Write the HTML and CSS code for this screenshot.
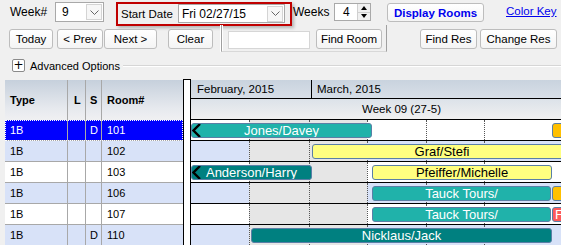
FILE: index.html
```html
<!DOCTYPE html>
<html>
<head>
<meta charset="utf-8">
<link rel="stylesheet" href="styles.css">
</head>
<body>
<div class="app">
  <div class="row1">
    <span class="lbl lbl-week">Week#</span>
    <div class="combo combo-week">
      <span class="val">9</span>
      <span class="dd"><svg width="9" height="5" viewBox="0 0 9 5"><polyline points="0.5,0.5 4.5,4.5 8.5,0.5" fill="none" stroke="#666" stroke-width="1"/></svg></span>
    </div>
    <div class="startbox">
      <span class="lbl lbl-start">Start Date</span>
      <div class="combo combo-date">
        <span class="val">Fri 02/27/15</span>
        <span class="dd"><svg width="9" height="5" viewBox="0 0 9 5"><polyline points="0.5,0.5 4.5,4.5 8.5,0.5" fill="none" stroke="#666" stroke-width="1"/></svg></span>
      </div>
    </div>
    <span class="lbl lbl-weeks">Weeks</span>
    <div class="spin">
      <span class="val">4</span>
      <div class="spin-btns"><span class="sb"><i class="up"></i></span><span class="sb"><i class="down"></i></span></div>
    </div>
    <button class="btn btn-display">Display Rooms</button>
    <a class="colorkey">Color Key</a>
  </div>

  <div class="row2">
    <button class="btn b-today">Today</button>
    <button class="btn b-prev">&lt; Prev</button>
    <button class="btn b-next">Next &gt;</button>
    <button class="btn b-clear">Clear</button>
    <div class="findpanel">
      <div class="textbox"></div>
      <button class="btn b-findroom">Find Room</button>
    </div>
    <button class="btn b-findres">Find Res</button>
    <button class="btn b-change">Change Res</button>
  </div>

  <div class="row3">
    <span class="plusbox">+</span>
    <span class="adv">Advanced Options</span>
    <span class="advline"></span>
  </div>

  <div class="main">
    <div class="grid">
      <div class="g-head">
        <div class="gc c-type">Type</div><div class="gc c-l">L</div><div class="gc c-s">S</div><div class="gc c-room">Room#</div>
      </div>
      <div class="g-row sel"><div class="gc c-type">1B</div><div class="gc c-l"></div><div class="gc c-s">D</div><div class="gc c-room">101</div></div>
      <div class="g-row alt"><div class="gc c-type">1B</div><div class="gc c-l"></div><div class="gc c-s"></div><div class="gc c-room">102</div></div>
      <div class="g-row"><div class="gc c-type">1B</div><div class="gc c-l"></div><div class="gc c-s"></div><div class="gc c-room">103</div></div>
      <div class="g-row alt"><div class="gc c-type">1B</div><div class="gc c-l"></div><div class="gc c-s"></div><div class="gc c-room">106</div></div>
      <div class="g-row"><div class="gc c-type">1B</div><div class="gc c-l"></div><div class="gc c-s"></div><div class="gc c-room">107</div></div>
      <div class="g-row alt"><div class="gc c-type">1B</div><div class="gc c-l"></div><div class="gc c-s">D</div><div class="gc c-room">110</div></div>
    </div>
    <div class="splitter"></div>
    <div class="chart">
      <div class="months">
        <div class="month m-feb">February, 2015</div>
        <div class="month m-mar">March, 2015</div>
      </div>
      <div class="weekrow"><span class="weeklbl">Week 09 (27-5)</span></div>

      <div class="c-row">
        <div class="day d0"></div><div class="day d1 we"></div><div class="day d2 we"></div><div class="day d3"></div><div class="day d4"></div><div class="day d5"></div>
        <div class="bar teal" style="left:0;width:181px"><svg class="chev" width="9" height="15" viewBox="0 0 9 15"><polyline points="8,1 1.5,7.5 8,14" fill="none" stroke="#000" stroke-width="2.4"/></svg>Jones/Davey</div>
        <div class="bar orange" style="left:361px;width:30px"></div>
      </div>
      <div class="c-row alt">
        <div class="day d0"></div><div class="day d1 we"></div><div class="day d2 we"></div><div class="day d3"></div><div class="day d4"></div><div class="day d5"></div>
        <div class="bar yellow" style="left:121px;width:260px">Graf/Stefi</div>
      </div>
      <div class="c-row">
        <div class="day d0"></div><div class="day d1 we"></div><div class="day d2 we"></div><div class="day d3"></div><div class="day d4"></div><div class="day d5"></div>
        <div class="bar dteal" style="left:0;width:121px"><svg class="chev" width="9" height="15" viewBox="0 0 9 15"><polyline points="8,1 1.5,7.5 8,14" fill="none" stroke="#000" stroke-width="2.4"/></svg>Anderson/Harry</div>
        <div class="bar yellow" style="left:181px;width:180px">Pfeiffer/Michelle</div>
      </div>
      <div class="c-row alt">
        <div class="day d0"></div><div class="day d1 we"></div><div class="day d2 we"></div><div class="day d3"></div><div class="day d4"></div><div class="day d5"></div>
        <div class="bar teal" style="left:181px;width:179px">Tauck Tours/</div>
        <div class="bar orange" style="left:361px;width:30px"></div>
      </div>
      <div class="c-row">
        <div class="day d0"></div><div class="day d1 we"></div><div class="day d2 we"></div><div class="day d3"></div><div class="day d4"></div><div class="day d5"></div>
        <div class="bar teal" style="left:181px;width:179px">Tauck Tours/</div>
        <div class="bar red" style="left:361px;width:30px"><span class="rtxt">F</span></div>
      </div>
      <div class="c-row alt">
        <div class="day d0"></div><div class="day d1 we"></div><div class="day d2 we"></div><div class="day d3"></div><div class="day d4"></div><div class="day d5"></div>
        <div class="bar dteal" style="left:60px;width:301px">Nicklaus/Jack</div>
      </div>
    </div>
  </div>
</div>
</body>
</html>
```

FILE: styles.css
```css
* { box-sizing: border-box; }
html, body { margin: 0; padding: 0; }
body {
  background: #f0f0f0;
  font-family: "Liberation Sans", Arial, sans-serif;
  font-size: 11px;
  color: #000;
  width: 561px;
  height: 245px;
  overflow: hidden;
}
.app { width: 561px; }

/* ---------- row 1 ---------- */
.row1 { display: flex; align-items: flex-start; height: 25px; }
.lbl { line-height: 20px; margin-top: 2px; white-space: nowrap; }
.lbl-week { margin-left: 10px; width: 45px; font-size: 12px; }
.combo {
  display: flex; align-items: center;
  background: #fff;
  border: 1px solid #a9a9a9;
  height: 20px;
  margin-top: 2px;
}
.combo .val { flex: 1; padding-left: 6px; font-size: 12px; }
.combo .dd {
  width: 16px; height: 16px; margin-right: 1px;
  border: 1px solid #d4d4d4;
  background: #f7f7f7;
  display: flex; align-items: center; justify-content: center;
}
.combo-week { width: 49px; }
.startbox {
  margin-left: 12px; margin-top: 2px;
  width: 176px; height: 24px;
  border: 2px solid #c00000;
  display: flex; align-items: flex-start;
  box-shadow: 2px 2px 3px rgba(0,0,0,0.25);
}
.lbl-start { margin-top: 0; width: 60px; padding-left: 3px; font-size: 11.5px; }
.combo-date { width: 107px; height: 19px; margin-top: 0; }
.combo-date .val { padding-left: 3px; }
.lbl-weeks { margin-left: 1px; width: 41px; font-size: 12px; }
.spin {
  width: 37px; height: 18px; margin-top: 3px;
  background: #fff; border: 1px solid #a9a9a9;
  display: flex;
}
.spin .val { flex: 1; padding-left: 8px; line-height: 16px; font-size: 12px; }
.spin-btns { width: 13px; display: flex; flex-direction: column; border-left: 1px solid #d0d0d0; }
.sb { flex: 1; display: flex; align-items: center; justify-content: center; background: #f0f0f0; }
.sb + .sb { border-top: 1px solid #d0d0d0; }
.up { width: 0; height: 0; border-left: 3px solid transparent; border-right: 3px solid transparent; border-bottom: 4px solid #000; }
.down { width: 0; height: 0; border-left: 3px solid transparent; border-right: 3px solid transparent; border-top: 4px solid #000; }

.btn {
  font-family: "Liberation Sans", Arial, sans-serif;
  font-size: 11.5px;
  color: #000;
  background: linear-gradient(#ffffff, #f4f4f4);
  border: 1px solid #bdbdbd;
  border-radius: 3px;
  height: 20px;
  padding: 0;
  margin: 0;
  text-align: center;
  white-space: nowrap;
}
.btn-display {
  margin-left: 16px; margin-top: 3px;
  width: 97px; height: 19px;
  color: #0000ee; font-weight: bold; font-size: 11.5px;
}
.colorkey {
  margin-left: 22px; margin-top: 2px; line-height: 18px;
  color: #0000ee; text-decoration: underline; font-size: 11.5px;
}

/* ---------- row 2 ---------- */
.row2 { display: flex; align-items: flex-start; height: 27px; }
.row2 > .btn { margin-top: 4px; }
.b-today { margin-left: 9px; width: 44px; }
.b-prev { margin-left: 4px; width: 46px; }
.b-next { margin-left: 1px; width: 53px; }
.b-clear { margin-left: 11px; width: 45px; }
.findpanel {
  margin-left: 8px;
  width: 166px; height: 27px;
  border-left: 1px solid #a0a0a0;
  border-right: 1px solid #a0a0a0;
  border-bottom: 1px solid #d8d8d8;
  box-shadow: 1px 0 0 #fff inset, -1px 0 0 #fff;
  display: flex; align-items: flex-start;
}
.textbox {
  margin-left: 6px; margin-top: 6px;
  width: 82px; height: 18px;
  background: #fff; border: 1px solid #d6d6d6;
}
.b-findroom { margin-left: 6px; margin-top: 4px; width: 66px; }
.b-findres { margin-left: 33px; width: 57px; }
.b-change { margin-left: 3px; width: 77px; }

/* ---------- row 3 ---------- */
.row3 { display: flex; align-items: center; height: 27px; }
.plusbox {
  margin-left: 12px;
  width: 13px; height: 13px;
  border: 1px solid #8a8a8a; border-radius: 2px;
  background: #fff;
  font-size: 12px; line-height: 10px; text-align: center;
  font-family: "DejaVu Sans", sans-serif;
}
.adv { margin-left: 5px; font-size: 11px; }
.advline {
  flex: 1; margin-left: 3px; height: 2px;
  border-top: 1px solid #d6d6d6; border-bottom: 1px solid #fff;
}

/* ---------- main ---------- */
.main { display: flex; align-items: flex-start; height: 166px; }
.grid { margin-left: 5px; margin-top: 1px; width: 178px; background: #fff; }
.g-head, .g-row { display: flex; }
.g-head {
  height: 40px;
  background: linear-gradient(#c6d0dc, #e6e9ee 70%, #f0f0f2);
  font-weight: bold;
}
.g-head .gc { line-height: 40px; border-right: 1px solid #a8a8a8; }
.gc { padding-left: 5px; white-space: nowrap; overflow: hidden; }
.c-type { width: 63px; }
.c-l { width: 18px; }
.c-s { width: 16px; padding-left: 4px; }
.c-room { width: 81px; border-right: none !important; }
.g-head .c-l { padding-left: 6px; }
.g-row { height: 21px; border-bottom: 1px solid #a8a8a8; background: #fff; }
.g-row .gc { line-height: 20px; border-right: 1px solid #a8a8a8; }
.g-row.alt { background: #d8e2f8; }
.g-row.sel { background: #0000ff; color: #fff; outline: 1px dotted #fff; outline-offset: -1px; }

.splitter {
  width: 8px; height: 166px;
  background: #fff;
  border-left: 1px solid #000; border-right: 1px solid #000; border-top: 1px solid #000;
}
.chart { width: 370px; margin-top: 1px; overflow: hidden; }
.months {
  display: flex; height: 19px;
  background: linear-gradient(#c9d3de, #d8dfe7);
  border-bottom: 1px solid #000;
}
.month { line-height: 18px; padding-left: 6px; white-space: nowrap; font-size: 11.5px; }
.m-feb { width: 121px; border-right: 1px solid #000; }
.m-mar { flex: 1; padding-left: 5px; }
.weekrow {
  height: 21px;
  background: linear-gradient(#dce2e9, #f0f0f0);
  border-bottom: 1px solid #000;
  padding-left: 171px;
  line-height: 20px; font-size: 11.5px; white-space: nowrap;
}
.c-row {
  position: relative;
  display: flex;
  height: 21px;
  border-bottom: 1px solid #000;
  background: #fff;
}
.day { height: 20px; border-left: 1px dotted #555; }
.d0 { width: 60px; border-left: none; }
.d1 { width: 61px; }
.d2 { width: 60px; }
.d3 { width: 60px; }
.d4 { width: 60px; }
.d5 { width: 79px; }
.c-row.alt .day { background: #d8e2f8; }
.c-row .day.we { background: #e6e6e6; }

.bar {
  position: absolute; top: 3px; height: 15px;
  border: 1px solid #5a7fa6;
  border-radius: 3px;
  font-family: "Liberation Sans", Arial, sans-serif;
  font-size: 13px; line-height: 13px;
  text-align: center; white-space: nowrap; overflow: hidden;
}
.bar .chev { position: absolute; left: 0; top: -1px; }
.teal { background: #20b2aa; color: #fff; }
.dteal { background: #008080; color: #fff; }
.yellow { background: #ffff80; color: #000; }
.orange { background: #ffc000; }
.red { background: #ff5a5a; color: #fff; text-align: left; }
.rtxt { padding-left: 2px; }
```
